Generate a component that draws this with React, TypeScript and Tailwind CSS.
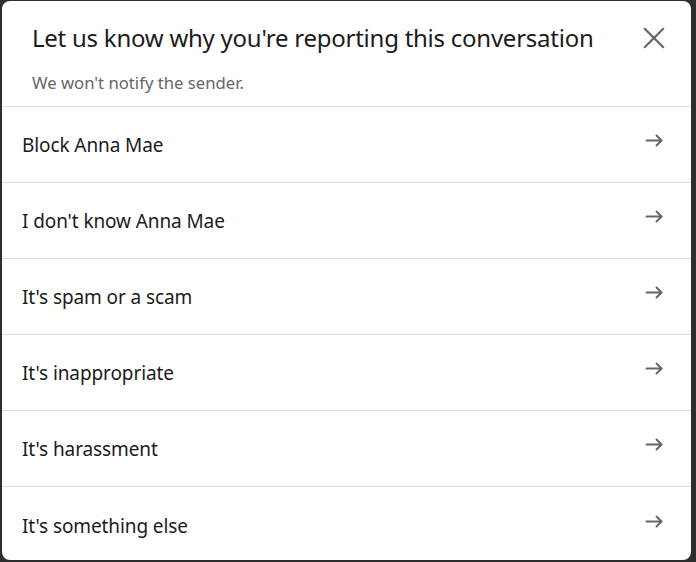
const reasons = [
  "Block Anna Mae",
  "I don't know Anna Mae",
  "It's spam or a scam",
  "It's inappropriate",
  "It's harassment",
  "It's something else",
];

function ArrowIcon() {
  return (
    <svg width="18" height="13" viewBox="0 0 18 13" fill="none" stroke="#666666" strokeWidth="2" strokeLinecap="round" strokeLinejoin="round">
      <path d="M1.5 6.5h15" />
      <path d="M11.5 1.5l5 5-5 5" />
    </svg>
  );
}

function CloseIcon() {
  return (
    <svg width="22" height="22" viewBox="0 0 22 22" fill="none" stroke="#666666" strokeWidth="2.2" strokeLinecap="square">
      <path d="M2 2l18 18" />
      <path d="M20 2L2 20" />
    </svg>
  );
}

export default function App() {
  return (
    <div className="h-[562px] w-[696px] overflow-hidden bg-[#2e2e2e] pl-[2px] pr-[5px] pt-[1px] font-['Noto_Sans',sans-serif]">
      <div className="flex h-[559px] flex-col overflow-hidden rounded-lg bg-white">
        <div className="h-[106px] shrink-0 border-b border-[#e3e3e3] pl-[30px] pr-[26px]">
          <div className="flex items-start justify-between pt-[20px]">
            <h2 className="text-[24px] leading-[34px] tracking-[-0.25px] text-[#1b1b1b]">
              Let us know why you're reporting this conversation
            </h2>
            <button className="mt-[6px] flex h-[22px] w-[22px] items-center justify-center">
              <CloseIcon />
            </button>
          </div>
          <p className="mt-[16px] text-[16.7px] leading-[24px] text-[#666666]">
            We won't notify the sender.
          </p>
        </div>
        {reasons.map((reason) => (
          <div
            key={reason}
            className="flex h-[76px] shrink-0 items-center justify-between border-b border-[#dcdcdc] pl-[20px] pr-[28px] last:border-b-0"
          >
            <span className="pt-[2px] text-[19px] tracking-[-0.1px] text-[#1b1b1b]">{reason}</span>
            <span className="-mt-[8px]">
              <ArrowIcon />
            </span>
          </div>
        ))}
      </div>
    </div>
  );
}
